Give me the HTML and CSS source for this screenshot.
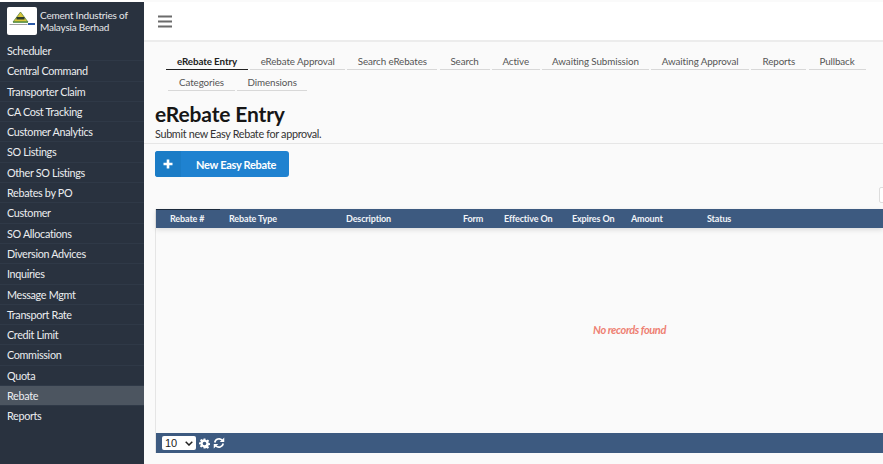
FILE: index.html
```html
<!DOCTYPE html>
<html lang="en">
<head>
<meta charset="utf-8">
<title>eRebate Entry</title>
<link rel="stylesheet" href="styles.css">
</head>
<body>
<aside class="sidebar">
  <div class="brand">
    <div class="logo">
      <svg width="28" height="26" viewBox="0 0 28 26">
        <polygon points="12.500,4 20,14 5,14" fill="#d8c53a" stroke="#4a7a3a" stroke-width="0.7"/>
        <rect x="8.500" y="9" width="8" height="2.500" fill="#2a3a2a"/>
        <rect x="5" y="13.500" width="15" height="1.200" fill="#4b8a3c"/>
        <rect x="1.500" y="16" width="18" height="0.800" fill="#888"/>
        <rect x="20" y="15" width="7" height="2" fill="#2b5aa8"/>
      </svg>
    </div>
    <div class="brand-name">Cement Industries of Malaysia Berhad</div>
  </div>
  <nav class="menu">
    <a class="item">Scheduler</a>
    <a class="item">Central Command</a>
    <a class="item">Transporter Claim</a>
    <a class="item">CA Cost Tracking</a>
    <a class="item">Customer Analytics</a>
    <a class="item">SO Listings</a>
    <a class="item">Other SO Listings</a>
    <a class="item">Rebates by PO</a>
    <a class="item">Customer</a>
    <a class="item">SO Allocations</a>
    <a class="item">Diversion Advices</a>
    <a class="item">Inquiries</a>
    <a class="item">Message Mgmt</a>
    <a class="item">Transport Rate</a>
    <a class="item">Credit Limit</a>
    <a class="item">Commission</a>
    <a class="item">Quota</a>
    <a class="item active">Rebate</a>
    <a class="item">Reports</a>
  </nav>
</aside>
<main class="main">
  <header class="topbar">
    <svg class="burger" width="14" height="13" viewBox="0 0 14 13"><path d="M0 1.500h14M0 6.500h14M0 11.500h14" stroke="#6b6b6b" stroke-width="2"/></svg>
  </header>
  <div class="content">
    <div class="tabs">
      <a class="tab on t1">eRebate Entry</a>
      <a class="tab t2">eRebate Approval</a>
      <a class="tab t3">Search eRebates</a>
      <a class="tab t4">Search</a>
      <a class="tab t5">Active</a>
      <a class="tab t6">Awaiting Submission</a>
      <a class="tab t7">Awaiting Approval</a>
      <a class="tab t8">Reports</a>
      <a class="tab t9">Pullback</a>
      <a class="tab t10">Categories</a>
      <a class="tab t11">Dimensions</a>
    </div>
    <div class="heading">
      <h1>eRebate Entry</h1>
      <p>Submit new Easy Rebate for approval.</p>
    </div>
    <div class="actions">
      <button class="btn"><span class="btn-icon"><svg width="10" height="10" viewBox="0 0 10 10"><path d="M5 .5v9M.5 5h9" stroke="#fff" stroke-width="2.600"/></svg></span><span class="btn-text">New Easy Rebate</span></button>
    </div>
    <div class="toolbar"><span class="stub"></span></div>
    <section class="grid">
      <div class="grid-head">
        <span class="col c1">Rebate #</span>
        <span class="col c2">Rebate Type</span>
        <span class="col c3">Description</span>
        <span class="col c4">Form</span>
        <span class="col c5">Effective On</span>
        <span class="col c6">Expires On</span>
        <span class="col c7">Amount</span>
        <span class="col c8">Status</span>
      </div>
      <div class="grid-body"><em>No records found</em></div>
      <div class="grid-foot">
        <div class="pager-wrap">
          <select class="pager"><option>10</option></select>
          <svg class="chev" width="8" height="5" viewBox="0 0 8 5"><path d="M.7.7 4 4 7.300.7" fill="none" stroke="#222" stroke-width="1.500"/></svg>
        </div>
        <svg width="11" height="11" viewBox="0 0 24 24"><path fill="#fff" fill-rule="evenodd" d="M10 1h4l.6 3.200 2 .8L19.300 3.200l2.800 2.800-1.800 2.700.8 2 3 .6v4l-3.200.6-.8 2 1.800 2.700-2.800 2.800-2.700-1.800-2 .8L14 23h-4l-.6-3.200-2-.8-2.700 1.800-2.800-2.800 1.800-2.700-.8-2L0 14v-4l3.200-.6.8-2L2.200 4.700 5 2l2.700 1.800 2-.8zM12 8a4 4 0 1 0 0 8 4 4 0 0 0 0-8z"/></svg>
        <svg width="12" height="12" viewBox="0 0 24 24"><path fill="none" stroke="#fff" stroke-width="3.400" d="M3.500 11A8.700 8.700 0 0 1 18.500 6.500M20.500 13A8.700 8.700 0 0 1 5.500 17.500"/><path fill="#fff" d="M22.500 1v9h-9zM1.500 23v-9h9z"/></svg>
      </div>
    </section>
  </div>
</main>
</body>
</html>
```
FILE: styles.css
```css
* { box-sizing: border-box; }
html, body { margin: 0; height: 100%; }
body {
  width: 883px;
  height: 464px;
  overflow: hidden;
  display: flex;
  font-family: Lato, "Liberation Sans", sans-serif;
  background: #fafafa;
  padding-top: 2px;
}
.sidebar {
  width: 144px;
  flex: none;
  background: #29323f;
  color: #f0f1f2;
  margin-top: -2px;
  padding-top: 2px;
  border-top: 2px solid #fff;
}
.brand { height: 37px; padding: 3px 4px 0 7px; display: flex; gap: 3px; }
.logo {
  width: 30px; height: 28px; background: #fff; border-radius: 2px; flex: none;
  display: flex; align-items: center; justify-content: center;
}
.brand-name { font-size: 10px; letter-spacing: -.2px; line-height: 12px; padding-top: 2px; color: #e6e8ea; }
.menu { display: flex; flex-direction: column; }
.item {
  height: 20.300px;
  padding-left: 7px;
  font-size: 10.800px;
  letter-spacing: -.33px;
  line-height: 19.500px;
  border-bottom: 1px solid #2f3947;
  color: #eceef0;
}
.item:last-child { border-bottom: 0; }
.item.active { background: #4c5560; }
.main { flex: 1; min-width: 0; display: flex; flex-direction: column; }
.topbar {
  height: 40px;
  background: #fff;
  border-bottom: 2px solid #ececec;
  display: flex;
  align-items: center;
  padding-left: 14px;
  flex: none;
}
.content { flex: 1; display: flex; flex-direction: column; min-height: 0; }
.tabs { display: flex; flex-wrap: wrap; padding: 7px 0 0 22px; width: 739px; flex: none; }
.tab {
  height: 21px;
  margin-right: 2.200px;
  padding-top: 3px;
  font-size: 9.800px;
  letter-spacing: -.1px;
  line-height: 18px;
  text-align: center;
  color: #555;
  border-bottom: 1px solid #d8d8d8;
}
.tab.on { color: #222; font-weight: 700; border-bottom: 1px solid #222; }
.t1 { width: 82px; } .t2 { width: 95px; } .t3 { width: 90px; } .t4 { width: 50px; }
.t5 { width: 48px; } .t6 { width: 107px; } .t7 { width: 98px; } .t8 { width: 55px; } .t9 { width: 57px; }
.t10 { width: 67px; margin-left: 2px; } .t11 { width: 70px; }
.heading { padding: 12px 0 0 11px; height: 53px; border-bottom: 1px solid #e6e6e6; flex: none; }
h1 { margin: 0; font-size: 21px; letter-spacing: -.15px; line-height: 22px; color: #161616; font-weight: 700; }
p { margin: 3px 0 0; font-size: 10.800px; letter-spacing: -.32px; line-height: 12px; color: #333; }
.actions { padding: 7px 0 0 11px; flex: none; }
.btn {
  width: 134px; height: 26px; padding: 0; border: 0; border-radius: 3px;
  background: #1f82d0; color: #fff; display: flex; align-items: center;
  font: 700 11px Lato, sans-serif; letter-spacing: -.3px;
}
.btn-icon { width: 26px; height: 26px; display: flex; align-items: center; justify-content: center; background: #1b7cc6; border-radius: 3px 0 0 3px; }
.btn-text { flex: 1; text-align: center; padding-left: 2px; }
.toolbar { height: 32px; position: relative; flex: none; }
.stub {
  position: absolute; right: -4px; top: 10px; width: 8px; height: 16px;
  background: #fff; border: 1px solid #ddd; border-radius: 2px;
}
.grid { margin-left: 11px; flex: 1; display: flex; flex-direction: column; margin-bottom: 11px; border-left: 1px solid #e5e5e5; min-height: 0; }
.grid-head {
  height: 19px; background: #3d5a80; color: #f1f4f8; flex: none;
  display: flex; align-items: center;
  font-size: 9px; letter-spacing: -.13px; font-weight: 700; position: relative;
  box-shadow: 0 2px 5px rgba(0,0,0,.12);
}
.grid-head::before { content: ""; position: absolute; left: 0; top: 0; width: 64px; height: 1px; background: #1c2a3c; }
.col { flex: none; }
.c1 { width: 73px; padding-left: 14px; }
.c2 { width: 117px; }
.c3 { width: 117px; }
.c4 { width: 41px; }
.c5 { width: 68px; }
.c6 { width: 59px; }
.c7 { width: 76px; }
.c8 { width: 50px; }
.grid-body {
  flex: 1; display: flex; align-items: center; justify-content: center;
  color: #ee7f72; font-size: 11px; letter-spacing: -.4px; padding: 0 0 2px 220px;
}
.grid-body em { font-style: italic; font-weight: 700; }
.grid-foot {
  height: 20px; background: #3d5a80; flex: none;
  display: flex; align-items: center; gap: 3px; padding-left: 6px;
}
.pager-wrap { position: relative; width: 34px; height: 14px; }
.pager {
  appearance: none; width: 34px; height: 14px; display: block;
  font: 11px/14px "Liberation Sans", sans-serif; padding: 0 0 0 3px;
  background: #fff; border: 0; border-radius: 2px; color: #222;
}
.chev { position: absolute; right: 3px; top: 5px; pointer-events: none; }
```
